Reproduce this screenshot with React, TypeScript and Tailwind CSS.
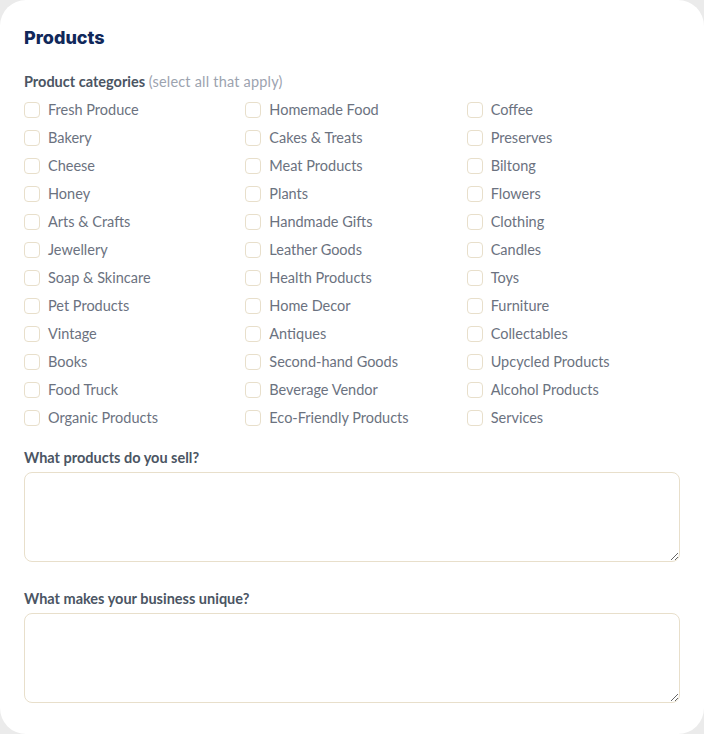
const categories = [
  'Fresh Produce', 'Homemade Food', 'Coffee',
  'Bakery', 'Cakes & Treats', 'Preserves',
  'Cheese', 'Meat Products', 'Biltong',
  'Honey', 'Plants', 'Flowers',
  'Arts & Crafts', 'Handmade Gifts', 'Clothing',
  'Jewellery', 'Leather Goods', 'Candles',
  'Soap & Skincare', 'Health Products', 'Toys',
  'Pet Products', 'Home Decor', 'Furniture',
  'Vintage', 'Antiques', 'Collectables',
  'Books', 'Second-hand Goods', 'Upcycled Products',
  'Food Truck', 'Beverage Vendor', 'Alcohol Products',
  'Organic Products', 'Eco-Friendly Products', 'Services',
]

export default function App() {
  return (
    <div className="min-h-screen bg-[#ebebeb]" style={{ fontFamily: 'Lato, "Noto Sans", sans-serif' }}>
      <div className="bg-white rounded-[26px] h-[734px] px-6 pt-6">
        <h2 className="text-[18px] leading-7 font-extrabold text-[#10285a] mb-5 [font-family:Inter,sans-serif]">Products</h2>

        {/* Categories */}
        <div className="text-[14.5px] leading-5 font-bold text-[#4b5563] mb-2">
          Product categories{' '}
          <span className="font-normal text-[#9ca3af] tracking-[0.2px]">(select all that apply)</span>
        </div>
        <div className="grid grid-cols-3 gap-x-2 gap-y-2">
          {categories.map((c) => (
            <label key={c} className="flex items-center gap-2 h-5 cursor-pointer">
              <input
                type="checkbox"
                className="appearance-none w-4 h-4 rounded-[4px] border border-[#e8dfcb] bg-white shrink-0"
              />
              <span className="text-[14.5px] text-[#6b7280]">{c}</span>
            </label>
          ))}
        </div>

        {/* Text fields */}
        <div className="mt-5">
          <div className="text-[14.5px] leading-5 font-bold text-[#4b5563] mb-1">What products do you sell?</div>
          <textarea className="block w-full h-[90px] rounded-lg border border-[#e8dfcb] outline-none px-3 py-2 text-sm" />
        </div>
        <div className="mt-[27px]">
          <div className="text-[14.5px] leading-5 font-bold text-[#4b5563] mb-1">What makes your business unique?</div>
          <textarea className="block w-full h-[90px] rounded-lg border border-[#e8dfcb] outline-none px-3 py-2 text-sm" />
        </div>
      </div>
    </div>
  )
}
